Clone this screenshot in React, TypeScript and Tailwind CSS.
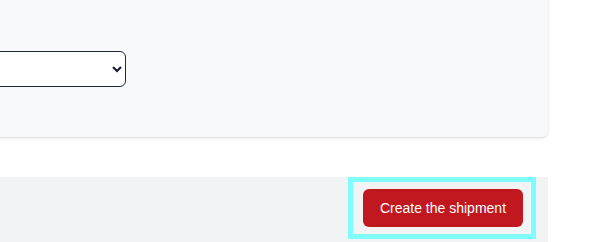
import React from "react";

export default function App() {
  return (
    <div className="w-[593px] h-[242px] bg-white overflow-hidden flex flex-col" style={{ fontFamily: '"Liberation Sans", Arial, sans-serif' }}>
      <div className="ml-[-20px] mt-[-20px] w-[568px] h-[157px] shrink-0 bg-[#f8f9fb] rounded-md shadow-[0_1px_3px_0_rgba(0,0,0,0.12),0_1px_2px_-1px_rgba(0,0,0,0.1)] pt-[71px]">
        <select className="block w-[146px] h-[36px] bg-white border border-[#1f2937] rounded-md text-sm text-[#111827]">
          <option></option>
        </select>
      </div>
      <div className="ml-[-20px] mt-[40px] w-[568px] h-[70px] shrink-0 bg-[#f2f3f5] flex justify-end pr-[12px]">
        <div className="h-[62px] border-[5px] border-[#7ffcfd] pl-[10px] pr-[8px] py-[7px] flex">
          <button className="w-[160px] h-[38px] rounded-md bg-[#c1181f] text-white text-[14px]">
            Create the shipment
          </button>
        </div>
      </div>
    </div>
  );
}
